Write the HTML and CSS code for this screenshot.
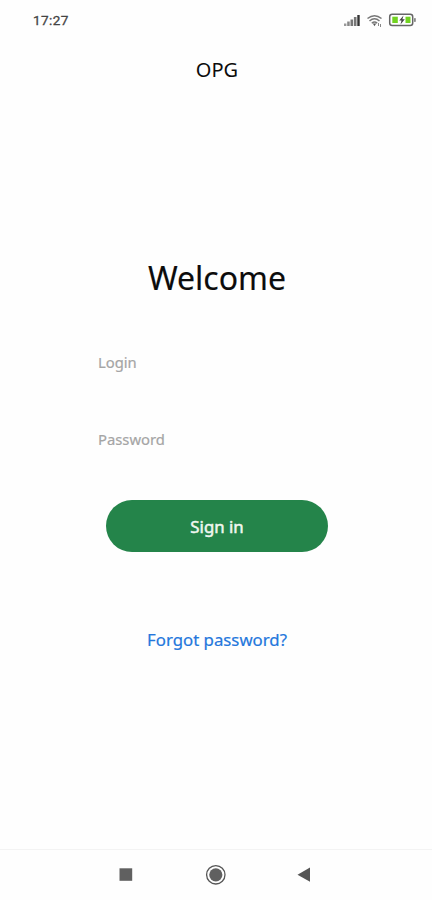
FILE: index.html
```html
<!doctype html>
<html lang="en">
<head>
	<title>OPG</title>
	<meta charset="utf-8"/>
	<link rel="stylesheet" href="styles.css">
</head>

<body>
	<div class="status">
		<span class="time">17:27</span>
		<svg class="status-icons" width="74" height="16" viewBox="0 0 74 16">
			<!-- signal -->
			<g fill="#777">
				<rect x="1" y="11.500" width="2.400" height="2.500" fill="#999"/>
				<rect x="4.200" y="9.500" width="2.500" height="4.500" fill="#888"/>
				<rect x="7.500" y="7.500" width="2.600" height="6.500"/>
				<rect x="10.900" y="5" width="2.600" height="9"/>
				<rect x="14.300" y="3" width="2.400" height="11" fill="#333"/>
			</g>
			<!-- wifi -->
			<g fill="none" stroke="#777" stroke-width="1.500">
				<path d="M24.500 6.500Q31.500 .8 38.500 6.500"/>
				<path d="M26.500 9Q31.500 4.500 36.500 9"/>
				<path d="M28.800 11.200Q31.500 8.800 34.200 11.200"/>
			</g>
			<path d="M29.800 11.500h3.400l-1.700 2.700z" fill="#555"/>
			<path d="M35.500 11v3M37.500 12v3" fill="none" stroke="#888"/>
			<!-- battery -->
			<rect x="46.700" y="2.200" width="23" height="11.200" rx="2.500" fill="#fff" stroke="#666" stroke-width="1.500"/>
			<rect x="71" y="6" width="1.800" height="4" rx=".7" fill="#888"/>
			<rect x="49.300" y="4.700" width="5.500" height="6.300" fill="#72d321"/>
			<rect x="62.500" y="4.700" width="5" height="6.300" fill="#72d321"/>
			<path d="M60.500 3.500l-4.300 5h2.300l-1 4 4.300-5.200h-2.400z" fill="#444"/>
		</svg>
	</div>

	<div class="title">OPG</div>

	<form class="login">
		<h1>Welcome</h1>
		<input class="field" type="text" placeholder="Login">
		<input class="field" type="password" placeholder="Password">
		<button class="signin" type="button">Sign in</button>
		<a class="forgot" href="#">Forgot password?</a>
	</form>

	<div class="navbar">
		<svg width="432" height="50" viewBox="0 0 432 50">
			<rect x="119.500" y="18.300" width="12.700" height="12.500" fill="#606060"/>
			<circle cx="215.800" cy="24.800" r="9.200" fill="none" stroke="#555" stroke-width="1.300"/>
			<circle cx="215.800" cy="24.800" r="6.600" fill="#606060"/>
			<path d="M297.500 24.700L310 17.500V31.700z" fill="#555"/>
		</svg>
	</div>
</body>
</html>
```

FILE: styles.css
```css
body{
	margin: 0;
	height: 900px;
	display: flex;
	flex-direction: column;
	background-color: #fefefe;
	font-family: "Noto Sans", sans-serif;
	color: #0c0c0c;
	overflow: hidden;
}
.status{
	height: 40px;
	box-sizing: border-box;
	padding: 0 15px 0 33px;
	display: flex;
	align-items: center;
	justify-content: space-between;
}
.time{
	font-family: Roboto, sans-serif;
	font-size: 13.5px;
	font-weight: 400;
	letter-spacing: 0.45px;
	color: #444;
	-webkit-text-stroke: 0.3px #444;
}
.status-icons{
	display: block;
	margin-top: -1px;
}
.title{
	height: 58px;
	line-height: 60px;
	padding-left: 2px;
	font-size: 20px;
	text-align: center;
}
.login{
	flex: 1;
	display: flex;
	flex-direction: column;
	align-items: center;
	padding: 156px 0 0 2px;
}
h1{
	margin: 0 0 44px;
	font-size: 32px;
	line-height: 48px;
	font-weight: 400;
	-webkit-text-stroke: 0.15px #0c0c0c;
}
.field{
	width: 240px;
	height: 32px;
	margin-bottom: 45px;
	padding: 0 1px;
	box-sizing: border-box;
	border: 0;
	background: none;
	font-family: inherit;
	font-size: 14.8px;
}
.field::placeholder{
	color: #a5a5a5;
	-webkit-text-stroke: 0.2px #a5a5a5;
}
.signin{
	width: 222px;
	height: 52px;
	padding: 0;
	border: 0;
	border-radius: 26px;
	background-color: #24844a;
	color: #f0f7f0;
	font-family: inherit;
	font-size: 16.8px;
	-webkit-text-stroke: 0.5px #f0f7f0;
}
.forgot{
	margin-top: 76px;
	font-size: 16.8px;
	line-height: 24px;
	color: #2477dc;
	text-decoration: none;
	-webkit-text-stroke: 0.2px #2477dc;
}
.navbar{
	height: 50px;
	border-top: 1px solid #f3f3f3;
}
.navbar svg{
	display: block;
}
```
